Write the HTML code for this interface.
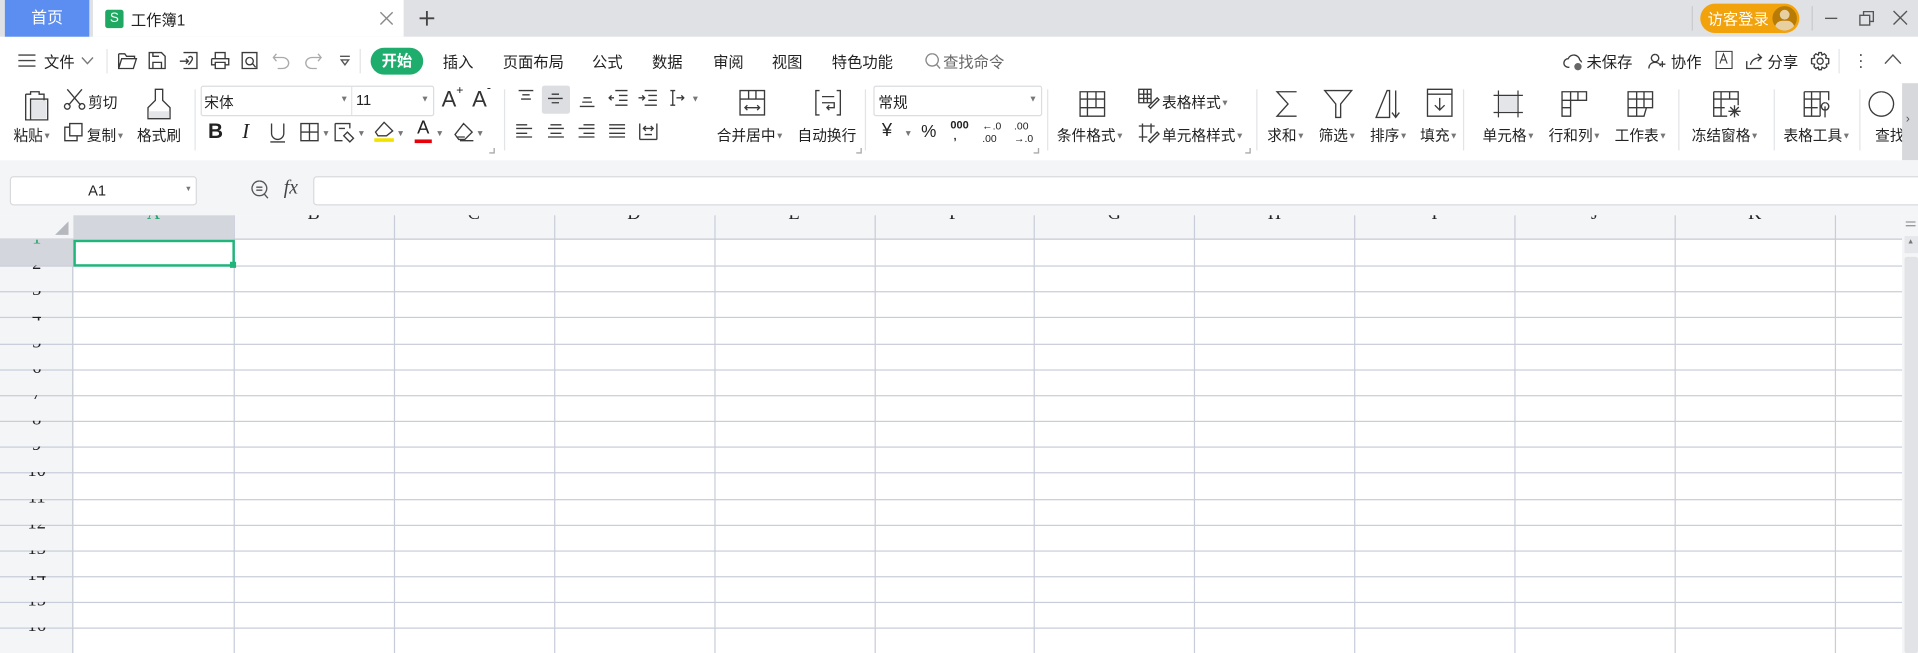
<!DOCTYPE html>
<html><head><meta charset="utf-8">
<style>
html,body{margin:0;padding:0;width:1918px;height:653px;overflow:hidden;background:#fff}
#s{position:absolute;left:0;top:0;width:1568px;height:534px;transform:scale(1.22321);transform-origin:0 0;font-family:"Liberation Sans","Noto Sans CJK SC",sans-serif;color:#222;overflow:hidden;background:#fff}
.a{position:absolute;white-space:nowrap}
.t{font-size:12px}
.m{font-size:12.5px;top:40px}
svg{position:absolute;overflow:visible}
svg *{fill:none;stroke:#3a3a3a;stroke-width:1.1}
.sep{position:absolute;width:1px;background:#e3e4e7}
.dd{font-size:7px;color:#777;vertical-align:middle}
</style></head><body><div id="s">
<!-- title bar -->
<div class="a" style="left:0;top:0;width:1568px;height:30px;background:#dfe1e5"></div>
<div class="a" style="left:4px;top:0;width:69px;height:30px;background:#5b8ef0;color:#fff;font-size:13px;line-height:30px;text-align:center">首页</div>
<div class="a" style="left:76px;top:0;width:254px;height:30px;background:#fff"></div>
<div class="a" style="left:86px;top:8px;width:15px;height:15px;background:#1fa861;border-radius:2px;color:#fff;font-size:11px;line-height:15px;text-align:center">S</div>
<div class="a" style="left:107px;top:6px;font-size:12.5px">工作簿1</div>
<svg style="left:311px;top:10px" width="10" height="10"><path d="M0 0L10 10M10 0L0 10" style="stroke:#888"/></svg>
<svg style="left:343px;top:9px" width="12" height="12"><path d="M6 0V12M0 6H12" style="stroke:#444;stroke-width:1.5"/></svg>
<div class="sep" style="left:1383px;top:5px;height:20px;background:#c8cacd"></div>
<div class="a" style="left:1390px;top:3px;width:81px;height:24px;background:#f2a20b;border-radius:12px"></div>
<div class="a" style="left:1396px;top:5px;color:#fff;font-size:12.5px">访客登录</div>
<div class="a" style="left:1449px;top:5px;width:20px;height:20px;border-radius:10px;background:#b77b06;overflow:hidden"><div style="position:absolute;left:6px;top:3px;width:8px;height:8px;border-radius:4px;background:#e8cfa2"></div><div style="position:absolute;left:2px;top:12px;width:16px;height:12px;border-radius:8px;background:#e8cfa2"></div></div>
<div class="sep" style="left:1481px;top:5px;height:20px;background:#c8cacd"></div>
<svg style="left:1492px;top:14px" width="10" height="2"><path d="M0 1H10" style="stroke:#555"/></svg>
<svg style="left:1520px;top:9px" width="12" height="12"><path d="M0.5 3.5H8.5V11.5H0.5ZM3.5 3.5V0.5H11.5V8.5H8.5" style="stroke:#555"/></svg>
<svg style="left:1548px;top:9px" width="11" height="11"><path d="M0 0L11 11M11 0L0 11" style="stroke:#555"/></svg>
<!-- menu row -->
<svg style="left:15px;top:44px" width="14" height="11"><path d="M0 1H14M0 5.5H14M0 10H14" style="stroke:#444"/></svg>
<div class="a m" style="left:36px">文件</div>
<svg style="left:67px;top:47px" width="9" height="5"><path d="M0 0L4.5 5L9 0" style="stroke:#777"/></svg>
<div class="sep" style="left:87px;top:40px;height:20px"></div>
<svg style="left:96px;top:42px" width="16" height="15"><path d="M1 2H6L7.5 4H14V6M1 2V14H13L15.5 6H3.5L1 14"/></svg>
<svg style="left:121px;top:42px" width="15" height="15"><path d="M1 1H11L14 4V14H1ZM4 14V9H11V14M4 1V4H9"/></svg>
<svg style="left:146px;top:42px" width="16" height="15"><path d="M4 1H15V14H4M1 8H8M6 6L8 8L6 10M8 5C10 3 12 5 11 7S9 10 8 11"/></svg>
<svg style="left:172px;top:42px" width="16" height="15"><path d="M4 6V1H12V6M1 6H15V11H12M4 11H1V6M4 9H12V14H4Z"/></svg>
<svg style="left:197px;top:42px" width="16" height="16"><path d="M1 1H13V14H1ZM7 5A3 3 0 1 0 7.1 5M9 9.5L12 13"/></svg>
<svg style="left:223px;top:43px" width="14" height="13"><path d="M3 1L0.5 4L3 7M0.5 4H8A5 4.5 0 0 1 8 13H4" style="stroke:#aaa"/></svg>
<svg style="left:249px;top:43px" width="14" height="13"><path d="M11 1L13.5 4L11 7M13.5 4H6A5 4.5 0 0 0 6 13H10" style="stroke:#aaa"/></svg>
<svg style="left:278px;top:45px" width="8" height="9"><path d="M0 1H8M1 4H7L4 8Z" style="stroke:#555"/></svg>
<div class="sep" style="left:294px;top:40px;height:20px"></div>
<div class="a" style="left:303px;top:39px;width:43px;height:22px;border-radius:11px;background:#1fad6e;color:#fff;font-size:12.5px;font-weight:bold;line-height:22px;text-align:center">开始</div>
<div class="a m" style="left:362px">插入</div>
<div class="a m" style="left:411px">页面布局</div>
<div class="a m" style="left:484px">公式</div>
<div class="a m" style="left:533px">数据</div>
<div class="a m" style="left:583px">审阅</div>
<div class="a m" style="left:631px">视图</div>
<div class="a m" style="left:680px">特色功能</div>
<svg style="left:756px;top:43px" width="13" height="14"><path d="M6 1A5 5 0 1 0 6.1 1M9.5 9.5L12.5 13" style="stroke:#888"/></svg>
<div class="a m" style="left:771px;color:#666">查找命令</div>
<svg style="left:1278px;top:43px" width="17" height="15"><path d="M5 12H4A3.5 3.5 0 0 1 4 5A5 5 0 0 1 13.5 6A3 3 0 0 1 15 8"/><circle cx="12" cy="11.5" r="3" style="fill:#666;stroke:none"/></svg>
<div class="a m" style="left:1297px">未保存</div>
<svg style="left:1347px;top:43px" width="15" height="14"><path d="M6 1.5A3 3 0 1 0 6.1 1.5M1 13C1 9 4 8 6 8S10 9 10.5 11M12 7V12M9.5 9.5H14.5"/></svg>
<div class="a m" style="left:1366px">协作</div>
<svg style="left:1402px;top:41px" width="15" height="16"><path d="M1 1H14V15H1ZM4 11L7 3L10 11M5 8H9" style="stroke-width:0.9"/></svg>
<svg style="left:1427px;top:43px" width="15" height="14"><path d="M1 7V13H13M4 10C5 6 8 4 13 4M10 1L13 4L10 7"/></svg>
<div class="a m" style="left:1445px">分享</div>
<svg style="left:1480px;top:42px" width="16" height="16"><circle cx="8" cy="8" r="2.5"/><path d="M7 1H9L9.5 3L11.5 2L13 3.5L12.5 5.5L15 6V10L13 10.5L13.5 12.5L11.5 14L9.5 13L9 15H7L6.5 13L4.5 14L3 12.5L3.5 10.5L1 10V6L3.5 5.5L3 3.5L4.5 2L6.5 3Z"/></svg>
<div class="sep" style="left:1503px;top:40px;height:20px"></div>
<div class="a" style="left:1519px;top:42px;font-size:14px;color:#555;line-height:5px">·<br>·<br>·</div>
<svg style="left:1541px;top:45px" width="13" height="7"><path d="M0 7L6.5 0L13 7" style="stroke:#555"/></svg>
<!-- ribbon -->
<svg style="left:20px;top:73px" width="20" height="26"><path d="M1 4H5V2H12V4H16V16M5 25H1V4M5 8H19V25H5Z"/><path d="M6 9H18V24H6Z" style="fill:#e4e5e8;stroke:none"/></svg>
<div class="a t" style="left:11px;top:102px">粘贴<span class="dd">▼</span></div>
<svg style="left:52px;top:72px" width="18" height="18"><path d="M3 1L14 14M15 1L4 14"/><circle cx="3" cy="15" r="2.3"/><circle cx="15" cy="15" r="2.3"/></svg>
<div class="a t" style="left:72px;top:75px">剪切</div>
<svg style="left:52px;top:100px" width="16" height="16"><path d="M5 1H15V11H5ZM5 4H1V15H11V11"/></svg>
<div class="a t" style="left:71px;top:102px">复制<span class="dd">▼</span></div>
<svg style="left:119px;top:72px" width="22" height="26"><path d="M8 1H14V10L20 16V25H2V16L8 10Z"/><path d="M2.5 19H19.5V24.5H2.5Z" style="fill:#e4e5e8;stroke:none"/></svg>
<div class="a t" style="left:112px;top:102px">格式刷</div>
<div class="sep" style="left:159px;top:73px;height:50px"></div>
<div class="a" style="left:164px;top:70px;width:189px;height:23px;border:1px solid #dcdde0;border-radius:2px"></div>
<div class="sep" style="left:287px;top:71px;height:23px"></div>
<div class="a t" style="left:167px;top:75px">宋体</div>
<div class="a dd" style="left:278px;top:78px">▼</div>
<div class="a t" style="left:291px;top:75px">11</div>
<div class="a dd" style="left:344px;top:78px">▼</div>
<div class="a" style="left:361px;top:71px;font-size:18px;color:#333">A</div><div class="a" style="left:373px;top:69px;font-size:10px">+</div>
<div class="a" style="left:386px;top:71px;font-size:18px;color:#333">A</div><div class="a" style="left:398px;top:67px;font-size:10px">-</div>
<div class="a" style="left:170px;top:98px;font-size:17px;font-weight:bold">B</div>
<div class="a" style="left:198px;top:98px;font-size:17px;font-style:italic;font-family:'Liberation Serif'">I</div>
<svg style="left:220px;top:100px" width="14" height="17"><path d="M2 1V9A5 5 0 0 0 12 9V1M1 16H13"/></svg>
<svg style="left:245px;top:100px" width="16" height="16"><path d="M1 1H15V15H1ZM8 1V15M1 8H15"/></svg><div class="a dd" style="left:263px;top:106px">▼</div>
<svg style="left:273px;top:100px" width="18" height="17"><path d="M1 1H13V5M1 1V15H7M4 5H9M11 8L16 13L13 16L8 11Z"/></svg><div class="a dd" style="left:292px;top:106px">▼</div>
<svg style="left:305px;top:99px" width="18" height="18"><path d="M9 1L16 8L11 12H4L2 9Z"/><path d="M1 14H17V17H1Z" style="fill:#f2e200;stroke:none"/></svg><div class="a dd" style="left:324px;top:106px">▼</div>
<div class="a" style="left:341px;top:96px;font-size:15px">A</div>
<div class="a" style="left:339px;top:114px;width:14px;height:3px;background:#e8000b"></div><div class="a dd" style="left:356px;top:106px">▼</div>
<svg style="left:370px;top:100px" width="18" height="16"><path d="M9 1L16 8L10 14H5L2 10ZM4 12H10M6 15H17"/></svg><div class="a dd" style="left:389px;top:106px">▼</div>
<svg style="left:400px;top:121px" width="5" height="5"><path d="M4 0V4H0" style="stroke:#aaa"/></svg>
<div class="sep" style="left:412px;top:73px;height:50px"></div>
<svg style="left:424px;top:73px" width="12" height="10"><path d="M0 1H12M3 4.5H9M2 8H10"/></svg>
<div class="a" style="left:443px;top:70px;width:23px;height:23px;background:#dcdee2;border-radius:2px"></div>
<svg style="left:448px;top:76px" width="12" height="10"><path d="M3 1H9M0 4.5H12M3 8H9"/></svg>
<svg style="left:474px;top:78px" width="12" height="10"><path d="M3 2H9M2 5.5H10M0 9H12"/></svg>
<svg style="left:498px;top:73px" width="15" height="14"><path d="M5 1H15M8 5H15M8 9H15M5 13H15M4 7H0M2 5L0 7L2 9"/></svg>
<svg style="left:522px;top:73px" width="15" height="14"><path d="M5 1H15M8 5H15M8 9H15M5 13H15M0 7H5M3 5L5 7L3 9"/></svg>
<svg style="left:547px;top:73px" width="17" height="14"><path d="M1 1H5M1 13H5M3 1V13M6 7H12M10 5L12 7L10 9"/></svg><div class="a dd" style="left:565px;top:78px">▼</div>
<svg style="left:422px;top:101px" width="13" height="12"><path d="M0 1H9M0 4H13M0 8H9M0 11H13"/></svg>
<svg style="left:448px;top:101px" width="13" height="12"><path d="M2 1H11M0 4H13M2 8H11M0 11H13"/></svg>
<svg style="left:473px;top:101px" width="13" height="12"><path d="M4 1H13M0 4H13M4 8H13M0 11H13"/></svg>
<svg style="left:498px;top:101px" width="13" height="12"><path d="M0 1H13M0 4H13M0 8H13M0 11H13"/></svg>
<svg style="left:522px;top:100px" width="16" height="15"><path d="M1 1V14M15 1V14M1 14H15M4 5H12M6 3L4 5L6 7M10 3L12 5L10 7M5 10H11"/></svg>
<svg style="left:604px;top:73px" width="22" height="22"><path d="M1 1H21V21H1ZM1 8H21M8 1V8M14 1V8M5 15H17M7 13L5 15L7 17M15 13L17 15L15 17"/></svg>
<div class="a t" style="left:586px;top:102px">合并居中<span class="dd">▼</span></div>
<svg style="left:666px;top:73px" width="22" height="22"><path d="M4 1H1V21H4M18 1H21V21H18M6 6H16M6 11H16V15H10M12 13L10 15L12 17"/></svg>
<div class="a t" style="left:652px;top:102px">自动换行</div>
<svg style="left:700px;top:121px" width="5" height="5"><path d="M4 0V4H0" style="stroke:#aaa"/></svg>
<div class="sep" style="left:707px;top:73px;height:50px"></div>
<div class="a" style="left:714px;top:70px;width:136px;height:23px;border:1px solid #dcdde0;border-radius:2px"></div>
<div class="a t" style="left:718px;top:75px">常规</div>
<div class="a dd" style="left:841px;top:78px">▼</div>
<div class="a" style="left:721px;top:98px;font-size:15px">¥</div><div class="a dd" style="left:739px;top:106px">▼</div>
<div class="a" style="left:753px;top:99px;font-size:14px">%</div>
<div class="a" style="left:777px;top:98px;font-size:9px;line-height:9px;font-weight:bold">000<br>&nbsp;,</div>
<div class="a" style="left:803px;top:98px;font-size:8.5px;line-height:10px">←.0<br>.00</div>
<div class="a" style="left:829px;top:98px;font-size:8.5px;line-height:10px">.00<br>→.0</div>
<svg style="left:845px;top:121px" width="5" height="5"><path d="M4 0V4H0" style="stroke:#aaa"/></svg>
<div class="sep" style="left:856px;top:73px;height:50px"></div>
<svg style="left:882px;top:74px" width="22" height="22"><path d="M1 1H21V21H1ZM1 7H21M1 14H21M7 1V21M14 1V14"/></svg>
<div class="a t" style="left:864px;top:102px">条件格式<span class="dd">▼</span></div>
<svg style="left:930px;top:72px" width="18" height="17"><path d="M1 1H11V12H1ZM1 5H11M1 8.5H11M5 1V12M8 1V12M9 15L16 8L17.5 9.5L10.5 16.5Z"/></svg>
<div class="a t" style="left:950px;top:75px">表格样式<span class="dd">▼</span></div>
<svg style="left:930px;top:100px" width="18" height="17"><path d="M1 3H14M4 1V16M11 1V9M1 12H8M9 15L16 8L17.5 9.5L10.5 16.5Z"/></svg>
<div class="a t" style="left:950px;top:102px">单元格样式<span class="dd">▼</span></div>
<svg style="left:1018px;top:121px" width="5" height="5"><path d="M4 0V4H0" style="stroke:#aaa"/></svg>
<div class="sep" style="left:1027px;top:73px;height:50px"></div>
<svg style="left:1043px;top:74px" width="18" height="22"><path d="M17 1H1L10 11L1 21H17"/></svg>
<div class="a t" style="left:1036px;top:102px">求和<span class="dd">▼</span></div>
<svg style="left:1082px;top:73px" width="24" height="24"><path d="M1 1H23L14 12V23H10V12Z"/></svg>
<div class="a t" style="left:1078px;top:102px">筛选<span class="dd">▼</span></div>
<svg style="left:1124px;top:73px" width="26" height="24"><path d="M1 23L10 1H12V23ZM17 1V23M14 19L17 23L20 19"/></svg>
<div class="a t" style="left:1120px;top:102px">排序<span class="dd">▼</span></div>
<svg style="left:1166px;top:72px" width="22" height="24"><path d="M1 1H21V23H1ZM1 5H21M11 8V18M7 14L11 18L15 14"/></svg>
<div class="a t" style="left:1161px;top:102px">填充<span class="dd">▼</span></div>
<div class="sep" style="left:1196px;top:73px;height:50px"></div>
<svg style="left:1221px;top:74px" width="24" height="22"><path d="M4 0V22M20 0V22M0 4H24M0 18H24" style="stroke-width:1"/><path d="M4.5 4.5H19.5V17.5H4.5Z" style="fill:#e4e5e8;stroke:none"/></svg>
<div class="a t" style="left:1212px;top:102px">单元格<span class="dd">▼</span></div>
<svg style="left:1276px;top:74px" width="22" height="22"><path d="M1 1H21V8H8V21H1ZM1 8H8M1 14H8M8 1V8M14 1V8"/></svg>
<div class="a t" style="left:1266px;top:102px">行和列<span class="dd">▼</span></div>
<svg style="left:1330px;top:74px" width="22" height="22"><path d="M1 1H21V14H16L14 21H1ZM1 7H21M1 14H16M8 1V21M14 1V14"/></svg>
<div class="a t" style="left:1320px;top:102px">工作表<span class="dd">▼</span></div>
<div class="sep" style="left:1372px;top:73px;height:50px"></div>
<svg style="left:1400px;top:74px" width="24" height="24"><path d="M1 1H21V12M1 1V21H12M1 7H21M1 14H10M7 1V21M14 1V7M18 12V22M13 17H23M14.5 13.5L21.5 20.5M21.5 13.5L14.5 20.5"/></svg>
<div class="a t" style="left:1383px;top:102px">冻结窗格<span class="dd">▼</span></div>
<div class="sep" style="left:1450px;top:73px;height:50px"></div>
<svg style="left:1474px;top:74px" width="24" height="24"><path d="M1 1H21V8M1 1V21H14M1 7H14M1 14H12M7 1V21M14 1V21M18 10A3 3 0 1 0 18.1 10M18 13V22"/></svg>
<div class="a t" style="left:1458px;top:102px">表格工具<span class="dd">▼</span></div>
<div class="sep" style="left:1520px;top:73px;height:50px"></div>
<svg style="left:1526px;top:74px" width="24" height="24"><path d="M12 1A10 10 0 1 0 12.1 1"/></svg>
<div class="a t" style="left:1533px;top:102px">查找</div>
<div class="a" style="left:1555px;top:68px;width:13px;height:63px;background:#d7d8db"></div>
<div class="a" style="left:1558px;top:92px;font-size:10px;color:#555">›</div>
<!-- formula band -->
<div class="a" style="left:0;top:131px;width:1568px;height:45px;background:#f4f5f7"></div>
<div class="a" style="left:8px;top:144px;width:151px;height:22px;background:#fff;border:1px solid #d9dade;border-radius:3px"></div>
<div class="a t" style="left:72px;top:149px">A1</div>
<div class="a dd" style="left:151px;top:152px;font-size:6px">▼</div>
<svg style="left:205px;top:147px" width="15" height="16"><path d="M7 1A6 6 0 1 0 7.1 1M4.5 6H9.5M4.5 8.5H9.5M11 11.5L14 15" style="stroke:#555"/></svg>
<div class="a" style="left:232px;top:145px;font-size:16px;font-style:italic;font-family:'Liberation Serif';color:#444">fx</div>
<div class="a" style="left:256px;top:144px;width:1320px;height:22px;background:#fff;border:1px solid #d9dade;border-radius:3px"></div>
<!-- grid -->
<div class="a" style="left:0;top:176px;width:1555px;height:20px;background:#f4f5f7;border-bottom:1px solid #c5c9d3;box-sizing:border-box"></div>
<div class="a" style="left:0;top:196px;width:60px;height:340px;background:#f4f5f7;border-right:1px solid #c5c9d3;box-sizing:border-box"></div>
<svg style="left:45px;top:181px" width="11" height="11"><path d="M11 0V11H0Z" style="fill:#b5b8be;stroke:none"/></svg>
<div class="a" style="left:60px;top:176px;width:131px;height:20px;background:#d3d6dc"></div>
<div class="a" style="left:0;top:196px;width:60px;height:21px;background:#d3d6dc"></div>
<div id="g"></div>
<div class="a" style="left:60px;top:196px;width:132px;height:22px;border:2px solid #1fb57b;box-sizing:border-box"></div>
<div class="a" style="left:188px;top:214px;width:5px;height:5px;background:#1fb57b"></div>
<!-- v scrollbar -->
<div class="a" style="left:1555px;top:176px;width:13px;height:358px;background:#f4f5f7"></div>
<svg style="left:1558px;top:181px" width="8" height="4"><path d="M0 0.5H8M0 3.5H8" style="stroke:#999"/></svg>
<div class="a" style="left:1557px;top:193px;width:11px;height:14px;background:#e6e7ea"></div>
<div class="a" style="left:1559px;top:195px;font-size:6px;color:#777">▲</div>
<div class="a" style="left:1557px;top:210px;width:11px;height:324px;background:#e2e3e6;border-radius:2px"></div>
</div>
<script>
var g='',L='ABCDEFGHIJKL';
for(var i=0;i<=11;i++){var x=60+i*130.9;
 g+='<div class="a" style="left:'+(x+130.9)+'px;top:176px;width:1px;height:360px;background:#c9cdd9"></div>';
 if(i<11)g+='<div class="a" style="left:'+x+'px;top:176px;width:131px;height:20px;overflow:hidden"><div style="position:absolute;left:0;width:131px;text-align:center;top:-9px;font-size:15px;font-family:\'Liberation Serif\';color:'+(i==0?'#1fa36c':'#222')+'">'+L[i]+'</div></div>';}
for(var r=0;r<16;r++){var y=196+r*21.15;
 g+='<div class="a" style="left:0;top:'+(y+21.15)+'px;width:1555px;height:1px;background:#c9cdd9"></div>';
 g+='<div class="a" style="left:0;top:'+y+'px;width:60px;height:21px;overflow:hidden"><div style="position:absolute;left:0;width:60px;text-align:center;top:-9px;font-size:15px;font-family:\'Liberation Serif\';color:'+(r==0?'#1fa36c':'#222')+'">'+(r+1)+'</div></div>';}
document.getElementById('g').innerHTML=g;
</script>
</body></html>
